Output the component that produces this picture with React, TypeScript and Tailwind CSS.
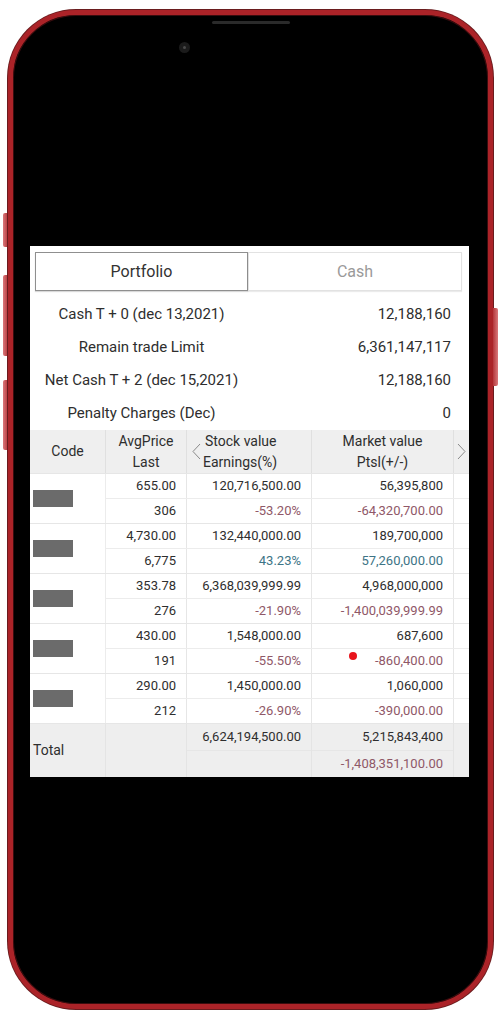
import React from "react";

type Row = {
  avg: string;
  last: string;
  sv: string;
  earn: string;
  mv: string;
  pts: string;
  neg: boolean;
};

const rows: Row[] = [
  { avg: "655.00", last: "306", sv: "120,716,500.00", earn: "-53.20%", mv: "56,395,800", pts: "-64,320,700.00", neg: true },
  { avg: "4,730.00", last: "6,775", sv: "132,440,000.00", earn: "43.23%", mv: "189,700,000", pts: "57,260,000.00", neg: false },
  { avg: "353.78", last: "276", sv: "6,368,039,999.99", earn: "-21.90%", mv: "4,968,000,000", pts: "-1,400,039,999.99", neg: true },
  { avg: "430.00", last: "191", sv: "1,548,000.00", earn: "-55.50%", mv: "687,600", pts: "-860,400.00", neg: true },
  { avg: "290.00", last: "212", sv: "1,450,000.00", earn: "-26.90%", mv: "1,060,000", pts: "-390,000.00", neg: true },
];

const info = [
  ["Cash T + 0 (dec 13,2021)", "12,188,160"],
  ["Remain trade Limit", "6,361,147,117"],
  ["Net Cash T + 2 (dec 15,2021)", "12,188,160"],
  ["Penalty Charges (Dec)", "0"],
];

function Group({ r, dot }: { r: Row; dot?: boolean }) {
  const c = r.neg ? "text-[#8f5868]" : "text-[#3d7486]";
  return (
    <div className="flex h-[50px] border-b border-[#e6e6e6]">
      <div className="w-[76px] flex items-center pl-[3px] border-r border-[#ececec]">
        <div className="w-[40px] h-[17px] bg-[#6b6b6b]" />
      </div>
      <div className="flex flex-col">
        <div className="flex h-[25px] border-b border-[#ececec]">
          <div className="w-[81px] flex items-center justify-end pr-[10px] border-r border-[#e6e6e6]">{r.avg}</div>
          <div className="w-[125px] flex items-center justify-end pr-[10px] border-r border-[#e6e6e6]">{r.sv}</div>
          <div className="w-[142px] flex items-center justify-end pr-[10px] border-r border-[#e6e6e6]">{r.mv}</div>
          <div className="w-[15px]" />
        </div>
        <div className="flex h-[24px]">
          <div className="w-[81px] flex items-center justify-end pr-[10px] border-r border-[#e6e6e6]">{r.last}</div>
          <div className={`w-[125px] flex items-center justify-end pr-[10px] border-r border-[#e6e6e6] ${c}`}>{r.earn}</div>
          <div className={`relative w-[142px] flex items-center justify-end pr-[10px] border-r border-[#e6e6e6] ${c}`}>
            {dot && <span className="absolute left-[37px] top-[3px] w-[8px] h-[8px] rounded-full bg-[#e8141c]" />}
            {r.pts}
          </div>
          <div className="w-[15px]" />
        </div>
      </div>
    </div>
  );
}

export default function App() {
  return (
    <div className="w-[501px] h-[1024px] bg-white flex items-start" style={{ fontFamily: "Roboto, 'Noto Sans', sans-serif" }}>
      {/* left buttons */}
      <div className="ml-[3px] w-[5px] flex flex-col">
        <div className="mt-[213px] h-[34px] rounded-l-[2px] bg-gradient-to-r from-[#d9777b] to-[#b3343a]" />
        <div className="mt-[28px] h-[81px] rounded-l-[2px] bg-gradient-to-r from-[#d9777b] to-[#b3343a]" />
        <div className="mt-[24px] h-[70px] rounded-l-[2px] bg-gradient-to-r from-[#d9777b] to-[#b3343a]" />
      </div>

      {/* phone */}
      <div className="mt-[10px] w-[485px] h-[999px] rounded-[68px] border-[5px] border-[#ab2328] bg-black shadow-[0_0_0_1px_#6a1c1e,inset_0_0_0_1px_#3a0c0e] flex flex-col">
        <div className="mt-[6px] mx-auto w-[78px] h-[3px] rounded-full bg-[#2a2a2a]" />
        <div className="mt-[18px] ml-[166px] w-[11px] h-[11px] rounded-full bg-[#1b1b1b] flex items-center justify-center">
          <div className="w-[3px] h-[3px] rounded-full bg-[#4a4a4a]" />
        </div>

        {/* app panel */}
        <div className="mt-[193px] ml-[17px] w-[439px] h-[531px] bg-white flex flex-col text-[#2e2e2e]">
          {/* tabs */}
          <div className="flex pt-[6px] pl-[5px] pr-[7px]">
            <div className="w-[213px] h-[39px] border border-[#8f8f8f] shadow-[0_1px_1px_rgba(0,0,0,0.15)] flex items-center justify-center text-[16px] text-[#333]">
              Portfolio
            </div>
            <div className="w-[214px] h-[39px] border border-[#e2e2e2] shadow-[0_1px_1px_rgba(0,0,0,0.08)] flex items-center justify-center text-[16px] text-[#9a9a9a]">
              Cash
            </div>
          </div>

          {/* info */}
          <div className="flex flex-col pt-[7px] text-[15px]">
            {info.map(([l, v]) => (
              <div key={l} className="flex h-[33px] items-center">
                <div className="w-[223px] text-center">{l}</div>
                <div className="flex-1 text-right pr-[18px]">{v}</div>
              </div>
            ))}
          </div>

          {/* table header */}
          <div className="flex h-[44px] bg-[#efefef] text-[14px] border-b border-[#e6e6e6]">
            <div className="w-[76px] flex items-center justify-center border-r border-[#e0e0e0]">Code</div>
            <div className="w-[81px] flex flex-col items-center pt-[1px] leading-[21px] border-r border-[#e0e0e0]">
              <span>AvgPrice</span>
              <span>Last</span>
            </div>
            <div className="w-[125px] flex items-center pl-[5px] border-r border-[#e0e0e0]">
              <svg width="9" height="17" viewBox="0 0 9 17" className="mr-[4px]">
                <polyline points="8,1 1,8.5 8,16" fill="none" stroke="#8a8a8a" strokeWidth="1" />
              </svg>
              <div className="flex flex-col pt-[1px] leading-[21px]">
                <span>Stock value</span>
                <span className="-ml-[2px]">Earnings(%)</span>
              </div>
            </div>
            <div className="w-[142px] flex flex-col items-center pt-[1px] leading-[21px] border-r border-[#e0e0e0]">
              <span>Market value</span>
              <span>Ptsl(+/-)</span>
            </div>
            <div className="w-[15px] flex items-center justify-center">
              <svg width="9" height="17" viewBox="0 0 9 17">
                <polyline points="1,1 8,8.5 1,16" fill="none" stroke="#8a8a8a" strokeWidth="1" />
              </svg>
            </div>
          </div>

          {/* data */}
          <div className="flex flex-col text-[13px]">
            {rows.map((r, i) => (
              <Group key={i} r={r} dot={i === 3} />
            ))}
          </div>

          {/* total */}
          <div className="flex flex-1 bg-[#eeeeee] text-[13px]">
            <div className="w-[76px] flex items-center pl-[3px] text-[14px] border-r border-[#e4e4e4]">Total</div>
            <div className="w-[81px] border-r border-[#e4e4e4]" />
            <div className="w-[125px] flex flex-col border-r border-[#e4e4e4]">
              <div className="h-[27px] flex items-center justify-end pr-[10px] border-b border-[#e6e6e6]">6,624,194,500.00</div>
              <div className="flex-1" />
            </div>
            <div className="w-[142px] flex flex-col border-r border-[#e4e4e4]">
              <div className="h-[27px] flex items-center justify-end pr-[10px] border-b border-[#e6e6e6]">5,215,843,400</div>
              <div className="flex-1 flex items-center justify-end pr-[10px] text-[#8f5868]">-1,408,351,100.00</div>
            </div>
            <div className="w-[15px]" />
          </div>
        </div>
      </div>

      {/* right button */}
      <div className="w-[5px] flex flex-col">
        <div className="mt-[308px] h-[78px] rounded-r-[2px] bg-gradient-to-r from-[#b3343a] to-[#d9777b]" />
      </div>
    </div>
  );
}
